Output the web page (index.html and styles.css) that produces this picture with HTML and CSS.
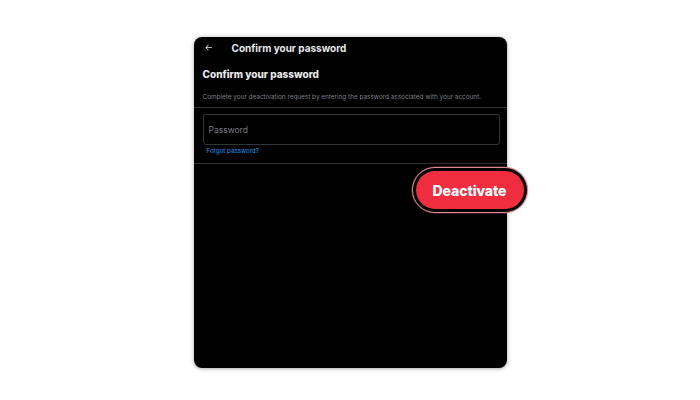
FILE: index.html
```html
<!DOCTYPE html>
<html>
<head>
<meta charset="utf-8">
<link rel="stylesheet" href="styles.css">
</head>
<body>
<div class="stage">
  <div class="panel">
    <div class="topbar">
      <svg class="back" viewBox="0 0 24 24" width="9" height="9"><path d="M7.414 13l5.043 5.04-1.414 1.42L3.586 12l7.457-7.46 1.414 1.42L7.414 11H21v2H7.414z" fill="#e7e9ea"/></svg>
      <span class="toptitle">Confirm your password</span>
    </div>
    <h1 class="heading">Confirm your password</h1>
    <p class="desc">Complete your deactivation request by entering the password associated with your account.</p>
    <div class="divider"></div>
    <div class="form">
      <div class="field"><span class="placeholder">Password</span></div>
      <a class="forgot">Forgot password?</a>
    </div>
    <div class="divider"></div>
    <div class="btn-ring"><div class="btn">Deactivate</div></div>
  </div>
</div>
</body>
</html>
```
FILE: styles.css
```css
html, body { margin: 0; padding: 0; background: #fff; }
body { width: 700px; height: 400px; overflow: hidden; font-family: "Inter", "Liberation Sans", sans-serif; }
.stage { display: flex; justify-content: center; padding-top: 37px; }
.panel {
  position: relative;
  width: 313px; height: 331px;
  background: #000;
  border-radius: 8px;
  box-shadow: 0 0 6px rgba(0,0,0,0.18), 0 1px 3px rgba(0,0,0,0.2);
  color: #e7e9ea;
}
.topbar { display: flex; align-items: center; height: 21px; padding: 0 0 0 10px; }
.back { margin-right: 19px; }
.toptitle { font-weight: 700; font-size: 10px; }
.heading { margin: 9px 0 0 9px; font-size: 10px; font-weight: 800; line-height: 14px; }
.desc { margin: 12px 0 0 9px; font-size: 6.4px; color: #7a7f84; line-height: 8px; white-space: nowrap; }
.divider { height: 1px; background: #2f3336; margin-top: 6px; }
.form { padding: 6px 7px 0 9px; }
.field { height: 29px; border: 1px solid #333639; border-radius: 3px; display: flex; align-items: center; padding-left: 5px; }
.placeholder { color: #7a7f84; font-size: 8.5px; }
.forgot { display: block; color: #1d9bf0; font-size: 6.2px; margin: 2px 0 0 4px; line-height: 8px; height: 9px; }
.form + .divider { margin-top: 7px; }
.btn-ring {
  position: absolute; left: 218px; top: 130px;
  width: 108px; height: 38px;
  border: 1.5px solid #e68a95;
  border-radius: 23px;
  background: #000;
  padding: 3px;
  box-shadow: 0 0 0 0.5px rgba(230,138,149,0.4);
}
.btn {
  height: 100%; border-radius: 20px; background: #ef2d3e;
  color: #fff; font-weight: 800; font-size: 14px;
  display: flex; align-items: center; justify-content: center;
  letter-spacing: -0.1px;
}
```
